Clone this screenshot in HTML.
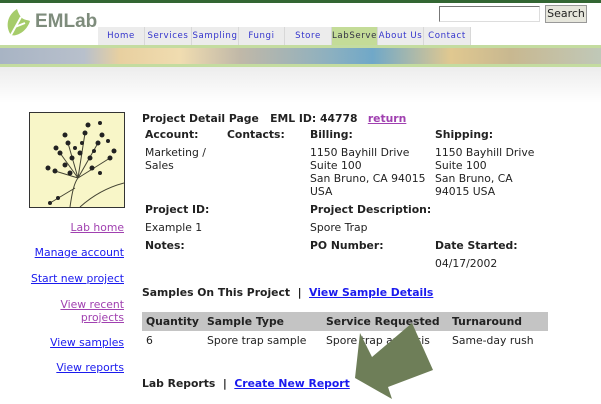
<!DOCTYPE html>
<html><head><style>
body{margin:0;width:601px;height:404px;overflow:hidden;background:#fff;font-family:"DejaVu Sans","Liberation Sans",sans-serif;font-size:10.8px;color:#222;position:relative}
.a{position:absolute;white-space:nowrap;line-height:13px}
b{font-weight:bold}
a{color:#1a1aee;text-decoration:underline}
.v{color:#a040b0}
.l{right:477px;text-align:right}
.tab{position:absolute;top:27px;height:18px;line-height:18px;font-size:8.6px;color:#3333cc;text-align:center;background:#ececec;border-right:1px solid #d8d8d8;letter-spacing:.6px;overflow:hidden}
</style></head><body>
<div style="position:absolute;left:0;top:0;width:601px;height:3px;background:#336633"></div>
<svg style="position:absolute;left:3px;top:7px" width="30" height="32"><path d="M14 2 C4 8 2 20 8 28 C14 30 24 24 27 14 C22 12 18 14 14 2Z" fill="#a6cc6a"/><path d="M8 28 L18 10 M12 20 L22 16" stroke="#fff" stroke-width="2" fill="none"/></svg>
<div class="a" style="left:35px;top:10px;font-size:19px;line-height:24px;color:#7e8c7c;font-weight:bold;font-family:'Liberation Sans',sans-serif">EMLab</div>
<div style="position:absolute;left:439px;top:6px;width:99px;height:14px;border:1px solid #777;border-right-color:#ddd;border-bottom-color:#ddd"></div>
<div style="position:absolute;left:545px;top:5px;width:40px;height:16px;background:#e6e6dc;border:1px solid #999;font-size:11px;line-height:16px;text-align:center">Search</div>
<div style="position:absolute;left:98px;top:27px;width:372px;height:18px;background:#ececec"></div>
<div class="tab" style="left:98px;width:46px">Home</div>
<div class="tab" style="left:145px;width:46px">Services</div>
<div class="tab" style="left:192px;width:46px">Sampling</div>
<div class="tab" style="left:239px;width:45px">Fungi</div>
<div class="tab" style="left:285px;width:46px">Store</div>
<div class="tab" style="left:332px;width:45px;background:#c4dc98;color:#334">LabServe</div>
<div class="tab" style="left:378px;width:45px">About Us</div>
<div class="tab" style="left:424px;width:46px">Contact</div>
<div style="position:absolute;left:0;top:45px;width:601px;height:3px;background:#c4dca0"></div>
<div style="position:absolute;left:0;top:48px;width:601px;height:16px;background:linear-gradient(90deg,#a8b4c4 0%,#b8c0cc 14%,#e8d0a0 20%,#f0dcb0 30%,#c0b8a8 40%,#8cb0c0 55%,#70a8c8 62%,#e0c890 75%,#c8b890 85%,#c0c8b8 100%)"></div>
<div style="position:absolute;left:0;top:64px;width:601px;height:3px;background:#c4dca0"></div>
<div style="position:absolute;left:0;top:67px;width:601px;height:36px;background:linear-gradient(#e8e8e8,#fff);opacity:.8"></div>
<div style="position:absolute;left:29px;top:112px;width:94px;height:94px;border:1px solid #333;background:#f8f6c8">
<svg width="94" height="94"><g stroke="#443" fill="none" stroke-width="1"><path d="M40 94 C42 80 44 70 48 65 M48 65 L30 40 M48 65 L38 30 M48 65 L55 20 M48 65 L68 30 M48 65 L80 45 M48 65 L25 58 M45 75 L20 90 M50 94 C60 85 75 75 94 70"/></g><g fill="#222"><circle cx="30" cy="40" r="2.5"/><circle cx="26" cy="35" r="2.5"/><circle cx="38" cy="30" r="2.5"/><circle cx="35" cy="22" r="2.5"/><circle cx="55" cy="20" r="2.5"/><circle cx="58" cy="12" r="2.5"/><circle cx="68" cy="30" r="2.5"/><circle cx="72" cy="22" r="2.5"/><circle cx="80" cy="45" r="2.5"/><circle cx="84" cy="38" r="2.5"/><circle cx="25" cy="58" r="2.5"/><circle cx="18" cy="55" r="2.5"/><circle cx="42" cy="45" r="2.5"/><circle cx="50" cy="40" r="2.5"/><circle cx="60" cy="45" r="2.5"/><circle cx="35" cy="52" r="2.5"/><circle cx="62" cy="55" r="2.5"/><circle cx="70" cy="60" r="2"/><circle cx="20" cy="90" r="2"/><circle cx="28" cy="85" r="2"/><circle cx="45" cy="35" r="2"/><circle cx="52" cy="30" r="2"/><circle cx="64" cy="38" r="2"/><circle cx="40" cy="60" r="2.5"/><circle cx="70" cy="10" r="2"/><circle cx="78" cy="28" r="2"/></g></svg></div>
<div class="a l" style="top:221px"><a class="v">Lab home</a></div>
<div class="a l" style="top:246px"><a>Manage account</a></div>
<div class="a l" style="top:272px"><a>Start new project</a></div>
<div class="a l" style="top:298px"><a class="v">View recent<br>projects</a></div>
<div class="a l" style="top:336px"><a>View samples</a></div>
<div class="a l" style="top:361px"><a>View reports</a></div>

<div class="a" style="left:142px;top:112px"><b>Project Detail Page &nbsp; EML ID: 44778</b> &nbsp; <a class="v"><b>return</b></a></div>
<div class="a" style="left:145px;top:128px"><b>Account:</b></div>
<div class="a" style="left:227px;top:128px"><b>Contacts:</b></div>
<div class="a" style="left:310px;top:128px"><b>Billing:</b></div>
<div class="a" style="left:435px;top:128px"><b>Shipping:</b></div>
<div class="a" style="left:145px;top:146px">Marketing /<br>Sales</div>
<div class="a" style="left:310px;top:146px">1150 Bayhill Drive<br>Suite 100<br>San Bruno, CA 94015<br>USA</div>
<div class="a" style="left:435px;top:146px">1150 Bayhill Drive<br>Suite 100<br>San Bruno, CA<br>94015 USA</div>
<div class="a" style="left:145px;top:203px"><b>Project ID:</b></div>
<div class="a" style="left:310px;top:203px"><b>Project Description:</b></div>
<div class="a" style="left:145px;top:221px">Example 1</div>
<div class="a" style="left:310px;top:221px">Spore Trap</div>
<div class="a" style="left:145px;top:239px"><b>Notes:</b></div>
<div class="a" style="left:310px;top:239px"><b>PO Number:</b></div>
<div class="a" style="left:435px;top:239px"><b>Date Started:</b></div>
<div class="a" style="left:435px;top:257px">04/17/2002</div>
<div class="a" style="left:142px;top:286px"><b>Samples On This Project &nbsp;| &nbsp;<a>View Sample Details</a></b></div>
<div style="position:absolute;left:142px;top:312px;width:406px;height:19px;background:#c4c4c4"></div>
<div class="a" style="left:146px;top:315px"><b>Quantity</b></div>
<div class="a" style="left:207px;top:315px"><b>Sample Type</b></div>
<div class="a" style="left:326px;top:315px"><b>Service Requested</b></div>
<div class="a" style="left:452px;top:315px"><b>Turnaround</b></div>
<div class="a" style="left:146px;top:334px">6</div>
<div class="a" style="left:207px;top:334px">Spore trap sample</div>
<div class="a" style="left:326px;top:334px">Spore trap analysis</div>
<div class="a" style="left:452px;top:334px">Same-day rush</div>
<div class="a" style="left:142px;top:377px"><b>Lab Reports &nbsp;| &nbsp;<a>Create New Report</a></b></div>
<svg style="position:absolute;left:0;top:0" width="601" height="404"><polygon points="355,378 360,333 372,357 412,323 433,370 388,387 392,399" fill="#6e7e58"/></svg>
</body></html>
